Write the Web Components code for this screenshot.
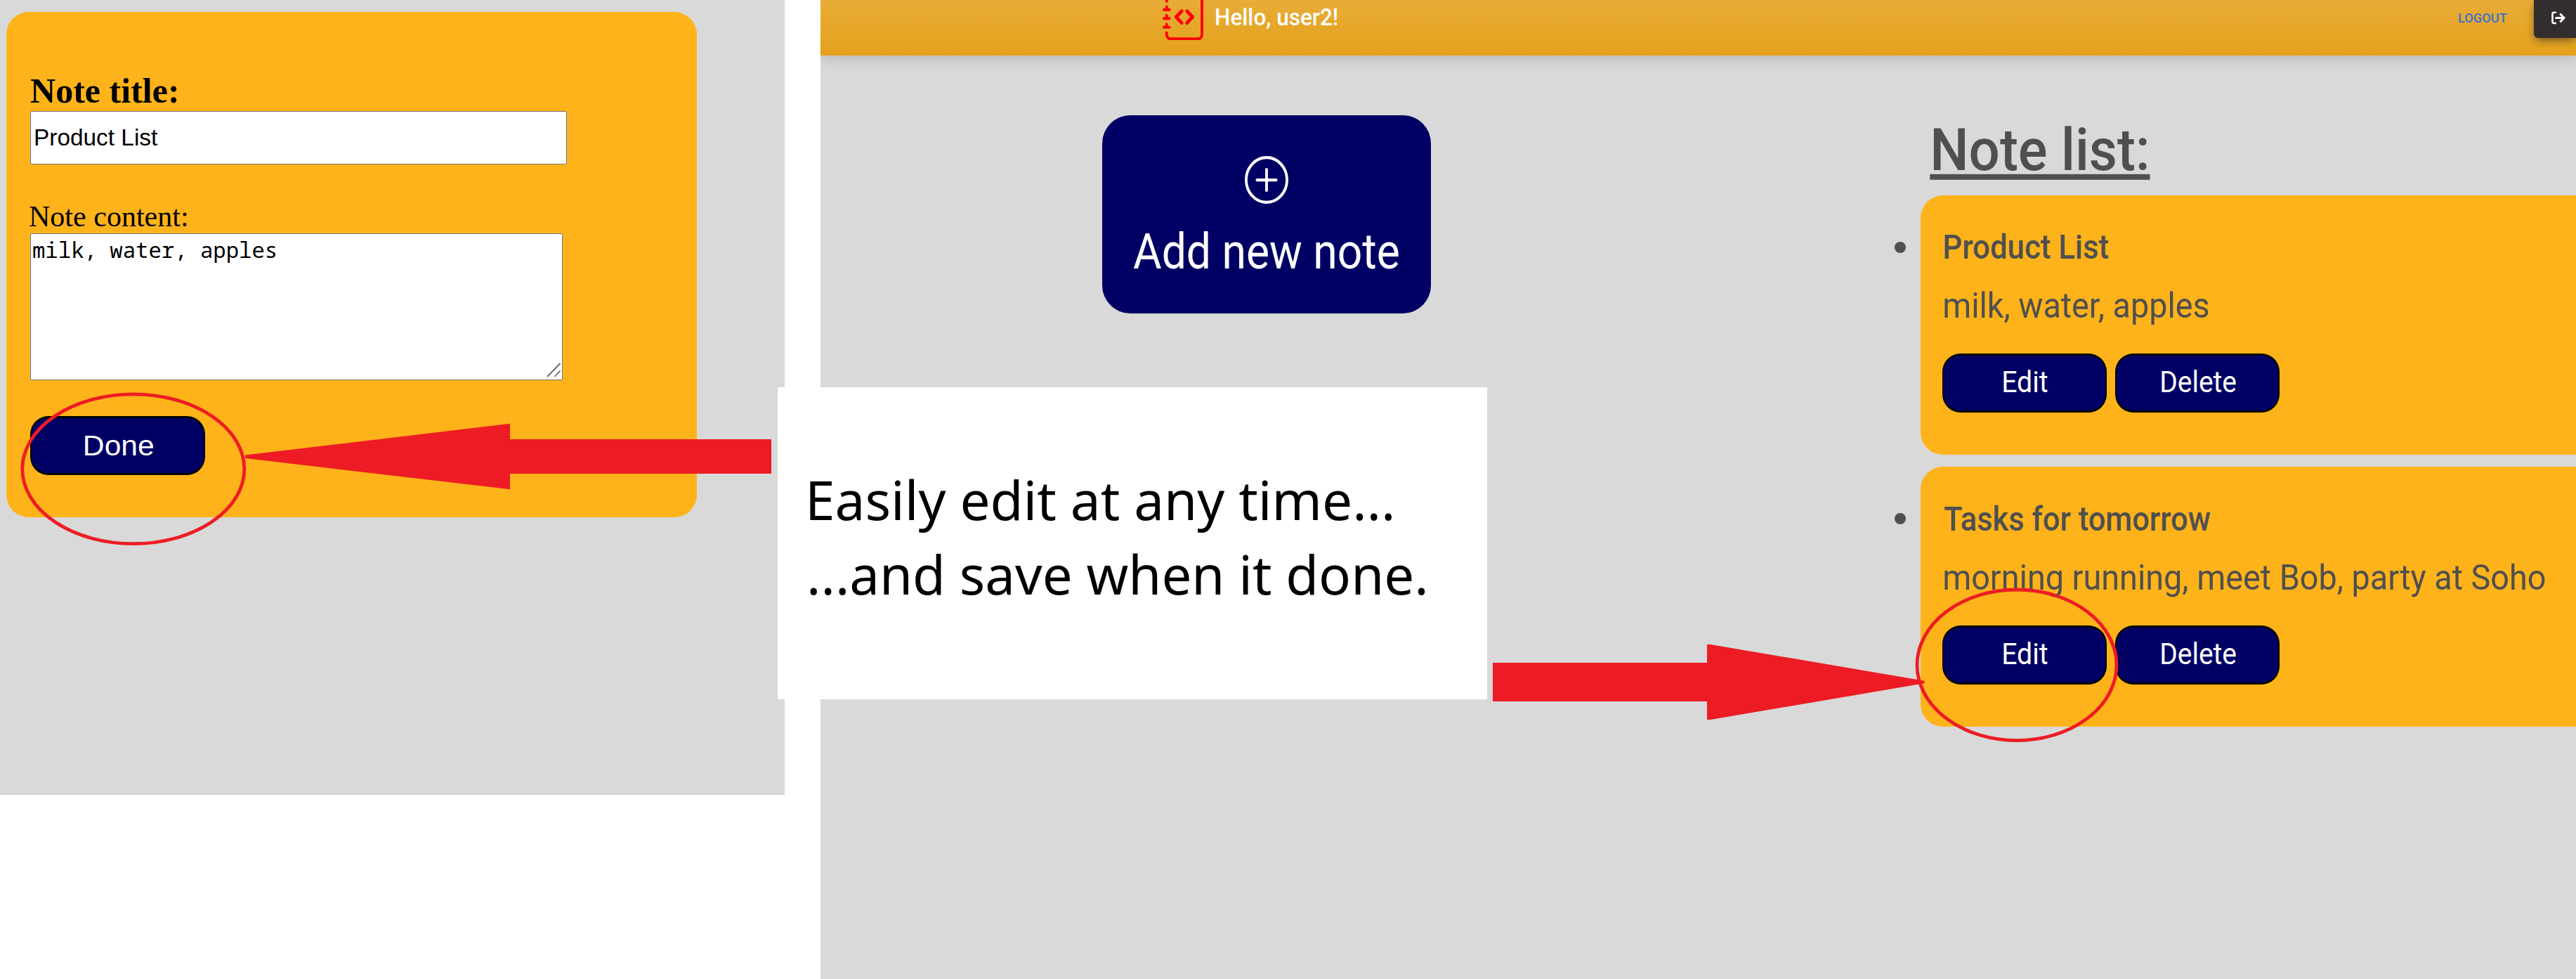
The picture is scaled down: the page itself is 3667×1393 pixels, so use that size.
<!DOCTYPE html>
<html lang="en">
<head>
<meta charset="utf-8">
<title>Notes</title>
<style>
html, body { margin: 0; height: 1393px; overflow: hidden; background: #fff; }
</style>
</head>
<body>
<notes-page></notes-page>
<script>
const define = (name, html, setup) => {
  const tpl = document.createElement('template');
  tpl.innerHTML = html;
  customElements.define(name, class extends HTMLElement {
    constructor() {
      super();
      this.attachShadow({ mode: 'open' }).append(tpl.content.cloneNode(true));
    }
    connectedCallback() { if (setup) setup(this, this.shadowRoot); }
  });
};

/* A single line of text whose box is its ink: w wide, cap height h, baseline at the bottom. */
define('fit-text', `
<style>
:host { display: block; flex: none; white-space: nowrap; }
span { display: block; width: max-content; transform-origin: 0 0; }
</style><span><slot></slot></span>`, (el, root) => {
  const w = +el.getAttribute('w'), h = +el.getAttribute('h');
  el.style.width = w + 'px';
  el.style.height = h + 'px';
  const span = root.querySelector('span');
  span.style.lineHeight = h + 'px';
  const cs = getComputedStyle(el);
  const ctx = document.createElement('canvas').getContext('2d');
  ctx.font = cs.fontWeight + ' ' + cs.fontSize + ' ' + cs.fontFamily;
  const m = ctx.measureText(el.textContent.trim());
  const s = w / (m.actualBoundingBoxLeft + m.actualBoundingBoxRight);
  const a = Math.round(m.fontBoundingBoxAscent), d = Math.round(m.fontBoundingBoxDescent);
  span.style.transform = 'translate(' + m.actualBoundingBoxLeft * s + 'px,' + (h - a + d) / 2 + 'px) scaleX(' + s + ')';
});

define('pill-button', `
<style>
:host { display: flex; flex: none; align-items: flex-start; justify-content: center; box-sizing: border-box;
  height: 84px; width: 234px; padding: 23.5px 0 0 3px; border: solid #000; border-width: 3px 2px; border-radius: 26px;
  background: #000064; color: #fff; font-size: 41.6px; }
</style><slot></slot>`);

define('note-form', `
<style>
:host { display: flex; flex-direction: column; align-items: flex-start; box-sizing: border-box; width: 983px; height: 719px;
  margin: 17px 0 0 9px; padding: 96px 0 0 34px; background: #ffb31a; border-radius: 32px; color: #000; }
.title { font: bold 49.8px "Liberation Serif", serif; }
.label { font: 41.8px "Liberation Serif", serif; margin: 60px 0 0 -1px; }
.input, .area { box-sizing: border-box; border: 1px solid #767676; border-radius: 2px; background: #fff; display: flex; }
.input { width: 764px; height: 76px; margin-top: 11.5px; padding: 24px 0 0 6px; font: 33.4px "Liberation Sans", sans-serif; }
.area { width: 758px; height: 209px; margin-top: 10px; padding: 11px 1px 3px 3px; font: 30.4px "Noto Sans Mono", "DejaVu Sans Mono", monospace; justify-content: space-between; }
.area svg { align-self: flex-end; }
pill-button { width: 249px; margin-top: 51px; font: 40.8px "Liberation Sans", sans-serif; }
</style>
<fit-text class="title" w="209" h="33.5">Note title:</fit-text>
<div class="input"><fit-text w="175" h="24">Product List</fit-text></div>
<fit-text class="label" w="224" h="28">Note content:</fit-text>
<div class="area"><fit-text w="346" h="23">milk, water, apples</fit-text>
<svg width="21" height="21" viewBox="0 0 21 21" fill="none" stroke="#666" stroke-width="1.8"><path d="M1 20 19.500 1M11.500 20l8-8.500"/></svg></div>
<pill-button><fit-text w="97" h="29">Done</fit-text></pill-button>`);

define('top-bar', `
<style>
:host { display: flex; align-items: flex-start; box-sizing: border-box; height: 79px; position: relative; overflow: visible;
  background: linear-gradient(#e8ac37, #e4a11b); box-shadow: 0 4px 12px rgba(0,0,0,.07), 0 4px 22px rgba(0,0,0,.09); }
.logo { margin: -9.4px 0 0 487px; flex: none; }
.hello { color: #fff; font-weight: 500; font-size: 33px; margin: 13.3px 0 0 17.500px; }
.logout { color: #3b71ca; font-weight: 500; font-size: 19.2px; margin: 19px 38px 0 auto; }
.exit { flex: none; display: flex; box-sizing: border-box; width: 60px; height: 54px; padding: 16px 0 0 25px; background: #332d2d;
  border-radius: 0 0 0 6px; box-shadow: 0 6px 14px -4px rgba(51,45,45,.55), 0 3px 10px rgba(51,45,45,.25); }
</style>
<svg class="logo" width="58" height="66.4" viewBox="0 0 15 16" preserveAspectRatio="none" fill="#f00">
<path d="M8.646 5.646a.5.5 0 0 1 .708 0l2 2a.5.5 0 0 1 0 .708l-2 2a.5.5 0 0 1-.708-.708L10.293 8 8.646 6.354a.5.5 0 0 1 0-.708zm-1.292 0a.5.5 0 0 0-.708 0l-2 2a.5.5 0 0 0 0 .708l2 2a.5.5 0 0 0 .708-.708L5.707 8l1.647-1.646a.5.5 0 0 0 0-.708z" stroke="#f00" stroke-width=".25"/>
<path d="M3 0h10a2 2 0 0 1 2 2v12a2 2 0 0 1-2 2H3a2 2 0 0 1-2-2v-1h1v1a1 1 0 0 0 1 1h10a1 1 0 0 0 1-1V2a1 1 0 0 0-1-1H3a1 1 0 0 0-1 1v1H1V2a2 2 0 0 1 2-2z"/>
<path d="M1 5v-.5a.5.5 0 0 1 1 0V5h.5a.5.5 0 0 1 0 1h-2a.5.5 0 0 1 0-1H1zm0 3v-.5a.5.5 0 0 1 1 0V8h.5a.5.5 0 0 1 0 1h-2a.5.5 0 0 1 0-1H1zm0 3v-.5a.5.5 0 0 1 1 0v.5h.5a.5.5 0 0 1 0 1h-2a.5.5 0 0 1 0-1H1z"/></svg>
<fit-text class="hello" w="172.500" h="23.4">Hello, user2!</fit-text>
<fit-text class="logout" w="69" h="13.7">LOGOUT</fit-text>
<div class="exit"><svg width="20" height="19" viewBox="0 0 20 19" fill="none" stroke="#fff" stroke-width="2.6"><path d="M7 1.700H3.500Q1.500 1.700 1.500 3.700V15Q1.500 17 3.500 17H7"/><path d="M5.500 9.500H18M12.300 3.500 18 9.500 12.300 15.500" stroke-width="3"/></svg></div>`);

define('add-note', `
<style>
:host { display: flex; flex-direction: column; align-items: center; box-sizing: border-box; flex: none; width: 468px; height: 282px;
  margin: 85px 0 0 401px; padding-top: 58px; background: #000064; border-radius: 40px; color: #fff; font-size: 69.8px; }
fit-text { margin: 43px 2px 0 0; }
</style>
<svg width="62" height="68" viewBox="0 0 16 16" preserveAspectRatio="none" fill="none" stroke="#fff" stroke-linecap="round"><circle cx="8" cy="8" r="7.5"/><path d="M8 4.500v7M4.500 8h7"/></svg>
<fit-text w="378" h="49.600">Add new note</fit-text>`);

define('note-item', `
<style>
:host { display: flex; align-items: flex-start; }
.dot { flex: none; width: 16px; height: 16px; margin: 66.500px 21px 0 0; border-radius: 50%; background: #4f4f4f; }
.card { flex: 1; box-sizing: border-box; height: var(--card, 369px); padding: 56.500px 0 0 31px; background: #ffb31a; border-radius: 32px 0 0 32px; }
.text { display: flex; flex-direction: column; gap: 48.500px; height: var(--text, 168.500px); padding-left: 3px; }
.title { display: block; font-weight: 500; font-size: 48.500px; }
.body { display: block; font-size: 50px; }
.row { display: flex; gap: 12px; }
</style>
<div class="dot"></div>
<div class="card">
<div class="text"><div class="title"><slot name="title"></slot></div><div class="body"><slot></slot></div></div>
<div class="row"><pill-button><fit-text w="63" h="29.500">Edit</fit-text></pill-button><pill-button><fit-text w="106" h="29.500">Delete</fit-text></pill-button></div>
</div>`);

define('note-list', `
<style>
:host { display: flex; flex-direction: column; width: 970px; gap: 17px; color: #4f4f4f; }
h1 { margin: 105px 0 18.400px 55px; font-size: 82.500px; font-weight: 500; }
u { text-decoration-thickness: 8px; text-underline-offset: 5.500px; text-decoration-skip-ink: none; }
.last { --card: 370px; --text: 169.500px; }
</style>
<h1><fit-text w="304" h="58.600"><u>Note list:</u></fit-text></h1>
<note-item><fit-text slot="title" w="233" h="34.500">Product List</fit-text><fit-text w="376" h="35.600">milk, water, apples</fit-text></note-item>
<note-item class="last"><fit-text slot="title" w="379" h="35">Tasks for tomorrow</fit-text><fit-text w="855" h="35.600">morning running, meet Bob, party at Soho</fit-text></note-item>`);

define('call-out', `
<style>
:host { position: absolute; left: 1107px; top: 551px; box-sizing: border-box; width: 1010px; height: 444px; padding: 134px 0 0 46px;
  display: flex; flex-direction: column; gap: 51px; background: #fff; color: #000; font: 77px "Noto Sans", "Open Sans", sans-serif;
  font-variant-ligatures: none; }
</style>
<fit-text w="829" h="55">Easily edit at any time...</fit-text>
<fit-text w="876" h="55">...and save when it done.</fit-text>`);

define('red-marks', `
<style>:host { position: absolute; inset: 0; pointer-events: none; } svg { display: block; }</style>
<svg width="3667" height="1393" viewBox="0 0 3667 1393" fill="#ed1c24">
<g fill="none" stroke="#ed1c24" stroke-width="4.800"><ellipse cx="189.800" cy="667.300" rx="158" ry="106.400"/><ellipse cx="2871" cy="946.300" rx="142" ry="107.300"/></g>
<path d="M349 647.500 724 603h2v22h372v49H726v22h-2L349 652z"/>
<path d="M2125 943h305v-26h5l300 51q5 0 5 2.500t-5 2.500l-300 51h-5v-26h-305z"/>
</svg>`);

define('notes-page', `
<style>
:host { display: flex; gap: 51px; position: relative; width: 3667px; height: 1393px; overflow: hidden; font-family: Roboto, sans-serif; }
.edit { flex: none; width: 1117px; height: 1131px; background: #d9d9d9; display: flex; align-items: flex-start; }
.home { flex: 1; height: 1393px; background: #d9d9d9; overflow: hidden; }
.main { display: flex; justify-content: space-between; align-items: flex-start; }
</style>
<section class="edit"><note-form></note-form></section>
<section class="home"><top-bar></top-bar><div class="main"><add-note></add-note><note-list></note-list></div></section>
<call-out></call-out><red-marks></red-marks>`);
</script>
</body>
</html>
